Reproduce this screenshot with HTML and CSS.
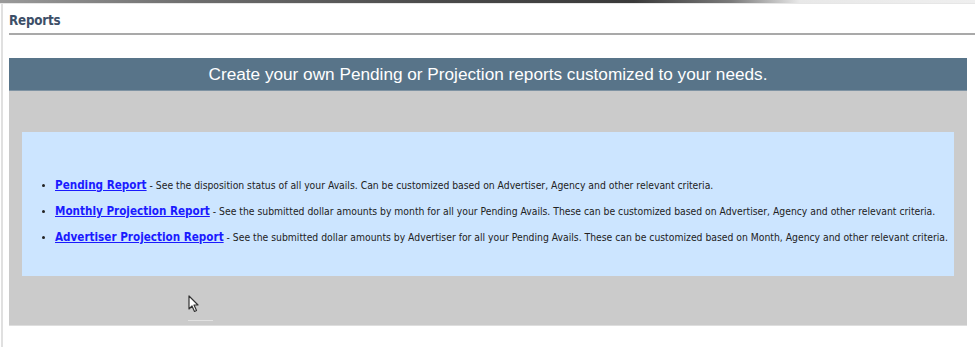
FILE: index.html
```html
<!DOCTYPE html>
<html>
<head>
<meta charset="utf-8">
<link rel="stylesheet" href="styles.css">
</head>
<body>
<div class="topstrip"></div>
<div class="page">
  <h1 class="title">Reports</h1>
  <div class="rule"></div>
  <div class="panel">
    <div class="panel-head">Create your own Pending or Projection reports customized to your needs.</div>
    <div class="panel-body">
      <div class="box">
        <ul class="reports">
          <li><a href="#" class="rlink">Pending Report</a> - See the disposition status of all your Avails. Can be customized based on Advertiser, Agency and other relevant criteria.</li>
          <li><a href="#" class="rlink">Monthly Projection Report</a> - See the submitted dollar amounts by month for all your Pending Avails. These can be customized based on Advertiser, Agency and other relevant criteria.</li>
          <li><a href="#" class="rlink">Advertiser Projection Report</a> - See the submitted dollar amounts by Advertiser for all your Pending Avails. These can be customized based on Month, Agency and other relevant criteria.</li>
        </ul>
      </div>
      <div class="cursor-area">
        <svg class="cursor" width="12" height="18" viewBox="0 0 12 18"><path d="M1 1 L1 14 L4 11 L6.5 16.5 L8.5 15.5 L6 10 L10 10 Z" fill="#fff" stroke="#333" stroke-width="1.2" stroke-linejoin="round"/></svg>
        <div class="cursor-line"></div>
      </div>
    </div>
  </div>
</div>
</body>
</html>
```
FILE: styles.css
```css
html, body {
  margin: 0;
  padding: 0;
  background: #ffffff;
}
body {
  width: 975px;
  height: 347px;
  overflow: hidden;
  font-family: "DejaVu Sans Condensed", "DejaVu Sans", sans-serif;
}
.topstrip {
  height: 3px;
  background: linear-gradient(to right, #9a9a9a 0%, #6d6d6d 20%, #4a4a4a 45%, #3a3a3a 65%, #7a7a7a 75%, #e8e8e8 82%, #efefef 100%);
  border-bottom: 1px solid #e6e6e6;
}
.page {
  border-left: 2px solid #e0e0e0;
  margin-left: 1px;
  padding-left: 6px;
  height: 343px;
  box-sizing: border-box;
}
.title {
  margin: 0;
  padding-top: 9px;
  font-size: 13.3px;
  line-height: 15px;
  font-weight: bold;
  color: #3d4f68;
  letter-spacing: -0.2px;
}
.rule {
  margin-top: 5px;
  height: 2px;
  background: #a9a9a9;
}
.panel {
  margin-top: 23px;
  margin-right: 8px;
}
.panel-head {
  height: 33px;
  background: #587489;
  color: #ffffff;
  font-family: "Liberation Sans", Arial, sans-serif;
  font-size: 17.2px;
  line-height: 33px;
  text-align: center;
  border-bottom: 1px solid #7f93a3;
  box-sizing: border-box;
}
.panel-body {
  background: #cbcbcb;
  padding: 41px 13px 0 13px;
  height: 235px;
  box-sizing: border-box;
  border-bottom: 1px solid #dedede;
}
.box {
  background: #cce5ff;
  height: 144px;
  box-sizing: border-box;
  padding-top: 40px;
}
.reports {
  margin: 0;
  padding-left: 33px;
  list-style: disc;
  font-size: 10.3px;
  color: #222222;
}
.reports li {
  height: 26px;
  line-height: 26px;
  white-space: nowrap;
}
.reports li::marker {
  font-size: 10px;
  color: #222;
}
.rlink {
  color: #1a1aff;
  font-weight: bold;
  font-size: 11.6px;
  text-decoration: underline;
}
.cursor-area {
  position: relative;
  height: 50px;
}
.cursor {
  position: absolute;
  left: 166px;
  top: 19px;
}
.cursor-line {
  position: absolute;
  left: 166px;
  top: 44px;
  width: 25px;
  height: 1px;
  background: #e2e2e2;
}
```
